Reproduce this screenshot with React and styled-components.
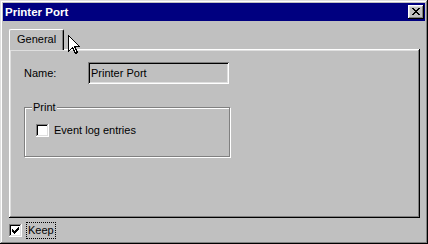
import React from "react";
import styled, { createGlobalStyle } from "styled-components";

const Global = createGlobalStyle`
  html, body { margin: 0; padding: 0; background: #c0c0c0; }
  body { font-family: "Liberation Sans", Arial, sans-serif; font-size: 11px; color: #000; }
  * { box-sizing: border-box; }
`;

const Window = styled.div`
  position: relative;
  width: 428px;
  height: 244px;
  padding: 3px;
  background: #c0c0c0;
  display: flex;
  flex-direction: column;
  box-shadow: inset -1px -1px #000, inset 1px 1px #dfdfdf,
    inset -2px -2px #808080, inset 2px 2px #fff;
`;

const TitleBar = styled.div`
  height: 18px;
  flex-shrink: 0;
  background: #000080;
  color: #fff;
  display: flex;
  align-items: center;
  justify-content: space-between;
  padding: 0 1px 0 2px;
`;

const TitleText = styled.span`
  font-weight: bold;
  font-size: 11.5px;
  line-height: 14px;
`;

const CloseButton = styled.div`
  width: 16px;
  height: 14px;
  background: #c0c0c0;
  display: flex;
  align-items: center;
  justify-content: center;
  padding: 0 1px 1px 0;
  box-shadow: inset -1px -1px #000, inset 1px 1px #fff,
    inset -2px -2px #808080, inset 2px 2px #dfdfdf;
`;

const Body = styled.div`
  flex: 1;
  display: flex;
  flex-direction: column;
  padding: 8px 5px 0 6px;
`;

const TabStrip = styled.div`
  display: flex;
  height: 20px;
  flex-shrink: 0;
`;

const Tab = styled.div`
  position: relative;
  z-index: 1;
  height: 21px;
  margin-bottom: -1px;
  padding: 2px 7px 0 7px;
  background: #c0c0c0;
  border-left: 1px solid #fff;
  border-top: 1px solid #fff;
  border-right: 1px solid #000;
  border-radius: 2px 2px 0 0;
  box-shadow: inset -1px 0 #808080;
  line-height: 14px;
`;

const Panel = styled.div`
  flex: 1;
  padding: 13px 15px 0 15px;
  box-shadow: inset -1px -1px #000, inset 1px 1px #fff,
    inset -2px -2px #808080, inset 2px 2px #dfdfdf;
`;

const FieldRow = styled.div`
  display: flex;
  align-items: center;
`;

const Label = styled.span`
  width: 64px;
`;

const TextField = styled.div`
  width: 141px;
  height: 22px;
  padding: 0 3px;
  display: flex;
  align-items: center;
  background: #c0c0c0;
  box-shadow: inset 1px 1px #808080, inset -1px -1px #fff,
    inset 2px 2px #000, inset -2px -2px #dfdfdf;
`;

const GroupBox = styled.div`
  position: relative;
  margin-top: 23px;
  width: 206px;
  height: 50px;
  padding: 16px 0 0 11px;
  border: 1px solid #808080;
  box-shadow: inset 1px 1px #fff, 1px 1px #fff;
`;

const Legend = styled.span`
  position: absolute;
  top: -8px;
  left: 7px;
  padding: 0 1px;
  background: #c0c0c0;
  line-height: 14px;
`;

const CheckRow = styled.label`
  display: flex;
  align-items: center;
  gap: ${(p) => p.$gap || 5}px;
  line-height: 13px;
`;

const CheckBox = styled.span`
  width: 13px;
  height: 13px;
  flex-shrink: 0;
  background: #fff;
  display: flex;
  align-items: center;
  justify-content: center;
  box-shadow: inset -1px -1px #fff, inset 1px 1px #808080,
    inset -2px -2px #dfdfdf, inset 2px 2px #000;
`;

const Footer = styled.div`
  height: 23px;
  flex-shrink: 0;
  padding-top: 4px;
`;

const FocusText = styled.span`
  height: 17px;
  display: flex;
  align-items: center;
  padding: 0 1px;
  border: 1px dotted #000;
`;

const Cursor = styled.svg`
  position: absolute;
  left: 68px;
  top: 35px;
`;

const XGlyph = () => (
  <svg width="8" height="7" viewBox="0 0 8 7" shapeRendering="crispEdges">
    <path
      fill="#000"
      d="M0 0h2v1H0zM6 0h2v1H6zM1 1h2v1H1zM5 1h2v1H5zM2 2h4v1H2zM3 3h2v1H3zM2 4h4v1H2zM1 5h2v1H1zM5 5h2v1H5zM0 6h2v1H0zM6 6h2v1H6z"
    />
  </svg>
);

const Check = () => (
  <svg width="7" height="7" viewBox="0 0 7 7" shapeRendering="crispEdges">
    <path
      fill="#000"
      d="M6 0h1v1H6zM5 1h2v1H5zM0 2h1v1H0zM4 2h3v1H4zM0 3h2v1H0zM3 3h3v1H3zM0 4h5v1H0zM1 5h3v1H1zM2 6h1v1H2z"
    />
  </svg>
);

export default function App() {
  return (
    <>
      <Global />
      <Window>
        <TitleBar>
          <TitleText>Printer Port</TitleText>
          <CloseButton>
            <XGlyph />
          </CloseButton>
        </TitleBar>
        <Body>
          <TabStrip>
            <Tab>General</Tab>
          </TabStrip>
          <Panel>
            <FieldRow>
              <Label>Name:</Label>
              <TextField>Printer Port</TextField>
            </FieldRow>
            <GroupBox>
              <Legend>Print</Legend>
              <CheckRow>
                <CheckBox />
                <span>Event log entries</span>
              </CheckRow>
            </GroupBox>
          </Panel>
          <Footer>
            <CheckRow $gap={4}>
              <CheckBox>
                <Check />
              </CheckBox>
              <FocusText>Keep</FocusText>
            </CheckRow>
          </Footer>
        </Body>
        <Cursor width="13" height="20" viewBox="0 0 13 20" shapeRendering="crispEdges">
          <path
            d="M0.5 0.5V16.5L4.5 12.5L7.5 18.5L9.5 17.5L6.5 11.5H11.5Z"
            fill="#fff"
            stroke="#000"
            strokeWidth="1"
            strokeLinejoin="miter"
          />
        </Cursor>
      </Window>
    </>
  );
}
